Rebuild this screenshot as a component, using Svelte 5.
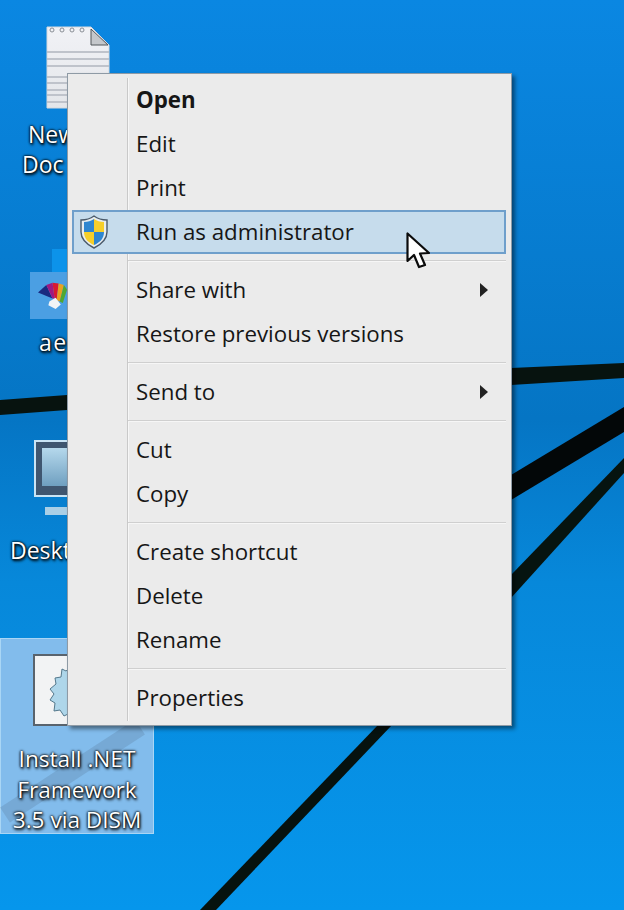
<script>
  const groups = [
    ['Open', 'Edit', 'Print', 'Run as administrator'],
    ['Share with', 'Restore previous versions'],
    ['Send to'],
    ['Cut', 'Copy'],
    ['Create shortcut', 'Delete', 'Rename'],
    ['Properties']
  ]
  const submenu = ['Share with', 'Send to']
</script>

<div class="desktop">
  <svg class="wall" width="624" height="910" viewBox="0 0 624 910">
    <defs>
      <linearGradient id="sky" x1="0" y1="0" x2="0" y2="1">
        <stop offset="0" stop-color="#0a87e2" />
        <stop offset="0.46" stop-color="#0575c4" />
        <stop offset="0.64" stop-color="#0788da" />
        <stop offset="1" stop-color="#0696ec" />
      </linearGradient>
    </defs>
    <rect width="624" height="910" fill="url(#sky)" />
    <rect x="52" y="249" width="16" height="23" fill="#0c93ea" />
    <path d="M0 400 L67 395 L511 368 L624 363 L624 378 L511 385 L67 410 L0 415Z" fill="#07130f" />
    <path d="M511 475 L624 407 L624 432 L511 500Z" fill="#030708" />
    <path d="M511 575 L624 458 L624 473 L511 598Z" fill="#061410" />
    <path d="M200 910 L378 725 L392 725 L216 910Z" fill="#06120f" />
  </svg>

  <div class="icon note">
    <svg width="66" height="88" viewBox="0 0 66 88">
      <defs>
        <linearGradient id="page" x1="0" y1="0" x2="0" y2="1">
          <stop offset="0" stop-color="#f1f2f6" />
          <stop offset="1" stop-color="#e4e6ea" />
        </linearGradient>
      </defs>
      <path d="M1 1 H45 L63 19 V82 H1Z" fill="url(#page)" stroke="#d5d8dd" />
      <path d="M45 3 L62 19 H45Z" fill="#c4c7cb" stroke="#50565a" />
      <g fill="none" stroke="#8a8f96" stroke-width="1">
        <circle cx="6" cy="4" r="2" /><circle cx="16" cy="4" r="2" /><circle cx="26" cy="4" r="2" /><circle cx="36" cy="4" r="2" />
      </g>
      <g stroke="#bfc3cb" stroke-width="2">
        <path d="M1 26 H63M1 33 H63M1 40 H63M1 51 H63M1 57 H63M1 64 H63M1 69 H63M1 76 H63" />
      </g>
    </svg>
  </div>
  <div class="label new"><span class="line-new">New</span><span>Doc</span></div>

  <div class="tile"></div>
  <svg class="icon fan" width="29" height="27" viewBox="0 0 28 36" preserveAspectRatio="none">
    <path d="M0 14 L8 4 L14 22Z" fill="#1a2a80" />
    <path d="M8 4 L14 1 L16 22 L14 22Z" fill="#a01880" />
    <path d="M14 1 L20 2 L18 24 L16 22Z" fill="#d81830" />
    <path d="M20 2 L25 4 L21 26 L18 24Z" fill="#e8a020" />
    <path d="M25 4 L28 10 L24 28 L21 26Z" fill="#50a830" />
    <path d="M11 26 L17 21 L22 30 L17 36 L10 31Z" fill="#f2f4f6" />
  </svg>
  <div class="label aer">aer</div>

  <div class="monitor"><div class="screen"></div></div>
  <div class="stand"></div>
  <div class="label desk">Deskt</div>

  <div class="selected">
    <svg class="streak" width="154" height="196" viewBox="0 0 154 196">
      <path d="M140 89 L5 177" stroke="#5d7f9e" stroke-opacity="0.3" stroke-width="18" />
    </svg>
    <div class="doc">
      <svg width="34" height="62" viewBox="0 0 34 62">
        <path d="M33 6 L26 8 L23 3 L18 7 L14 5 L13 13 L7 14 L8 20 L2 25 L6 30 L2 36 L7 39 L6 47 L12 46 L16 52 L22 49 L28 53 L33 52Z" fill="#aed6ea" stroke="#54788c" />
        <circle cx="34" cy="29" r="13" fill="#f4f6f6" stroke="#3f4f58" stroke-width="2" />
      </svg>
    </div>
    <div class="sel-text">Install .NET<br />Framework<br />3.5 via DISM</div>
  </div>

  <div class="menu">
    <div class="gutter"></div>
    {#each groups as items, g}
      {#if g > 0}<div class="sep"></div>{/if}
      {#each items as item}
        <div class="item" class:hot={item === 'Run as administrator'} class:bold={item === 'Open'}>
          {#if item === 'Run as administrator'}
            <svg class="shield" width="28" height="34" viewBox="0 0 28 34">
              <path d="M14 1 C18 4 23 5 27 5 V17 C27 25 20 30 14 33 C8 30 1 25 1 17 V5 C5 5 10 4 14 1Z" fill="#e8edf0" stroke="#4a5a6a" stroke-width="1.4" />
              <path d="M14 4 V17 H4 V7 C8 7 11 6 14 4Z" fill="#2f86d0" />
              <path d="M14 4 C17 6 20 7 24 7 V17 H14Z" fill="#f6cf2a" />
              <path d="M4 17 H14 V30 C9 28 4 24 4 17Z" fill="#f6cf2a" />
              <path d="M14 17 H24 C24 24 19 28 14 30Z" fill="#2f86d0" />
            </svg>
          {/if}
          <span>{item}</span>
          {#if submenu.includes(item)}<i class="arrow"></i>{/if}
        </div>
      {/each}
    {/each}
  </div>

  <svg class="cursor" width="26" height="38" viewBox="0 0 26 38">
    <path d="M1.5 1.5 V29 L8 23 L13 35 L19 33 L14 21.5 L23 21Z" fill="#fff" stroke="#0b0b0b" stroke-width="2.2" stroke-linejoin="round" />
  </svg>
</div>

<style>
  :global(body) { margin: 0; }
  .desktop { position: relative; width: 624px; height: 910px; overflow: hidden; font-family: "Open Sans", "Noto Sans", sans-serif; }
  .wall { position: absolute; left: 0; top: 0; }
  .icon { position: absolute; }
  .note { left: 46px; top: 26px; line-height: 0; }
  .fan { left: 38px; top: 282px; }
  .tile { position: absolute; left: 30px; top: 272px; width: 50px; height: 47px; background: #4b9fe3; }
  .label { position: absolute; color: #fff; font-size: 23px; line-height: 30px; text-shadow: 0 0 2px #000, 0 0 3px #000, 1px 2px 3px #000; }
  .label span { display: block; }
  .new { left: 22px; top: 119px; }
  .line-new { margin-left: 6px; }
  .aer { left: 39px; top: 327px; letter-spacing: 1.5px; }
  .desk { left: 10px; top: 535px; }
  .monitor { position: absolute; left: 34px; top: 440px; width: 40px; height: 57px; border: 2px solid #c9e4f5; border-right: 0; box-sizing: border-box; background: #3f5670; padding: 6px 0 9px 6px; }
  .screen { height: 100%; background: linear-gradient(180deg, #b5d8ec, #6f9fc0); }
  .stand { position: absolute; left: 45px; top: 507px; width: 24px; height: 8px; background: #a9cfe6; }
  .selected { position: absolute; left: 0; top: 638px; width: 154px; height: 196px; box-sizing: border-box; background: #82bcec; border: 1px solid #a9d6f5; }
  .streak { position: absolute; left: -1px; top: -1px; }
  .doc { position: absolute; left: 32px; top: 15px; width: 70px; height: 72px; box-sizing: border-box; background: #f2f3f4; border: 2px solid #59636d; padding: 8px 0 0 13px; overflow: hidden; line-height: 0; }
  .sel-text { position: absolute; left: 0; right: 0; top: 105px; text-align: center; color: #fff; font-size: 22.6px; line-height: 30.5px; text-shadow: 0 0 2px #000, 0 0 3px #000, 1px 2px 3px #000; }
  .menu { position: absolute; left: 67px; top: 73px; width: 445px; height: 653px; box-sizing: border-box; padding: 4px 5px 5px 4px; background: #ebebeb; border: 1px solid #8e9aa5; box-shadow: 3px 3px 4px rgba(0, 0, 0, 0.45); }
  .gutter { position: absolute; left: 59px; top: 4px; bottom: 4px; width: 1px; background: #c9c9c9; border-right: 1px solid #f7f7f7; }
  .item { position: relative; height: 44px; box-sizing: border-box; display: flex; align-items: center; padding: 0 0 2px 64px; color: #161616; font-size: 22.3px; white-space: nowrap; }
  .bold { font-weight: 700; }
  .hot { background: #c6dcec; outline: 2px solid #6f9fcb; outline-offset: -2px; }
  .shield { position: absolute; left: 8px; top: 5px; }
  .arrow { position: absolute; left: 408px; top: 15px; width: 0; height: 0; border-left: 8px solid #222; border-top: 7px solid transparent; border-bottom: 7px solid transparent; }
  .sep { position: relative; height: 2px; margin: 6px 0 6px 56px; background: #cfcfcf; border-bottom: 1px solid #f6f6f6; box-sizing: border-box; }
  .cursor { position: absolute; left: 406px; top: 232px; }
</style>
